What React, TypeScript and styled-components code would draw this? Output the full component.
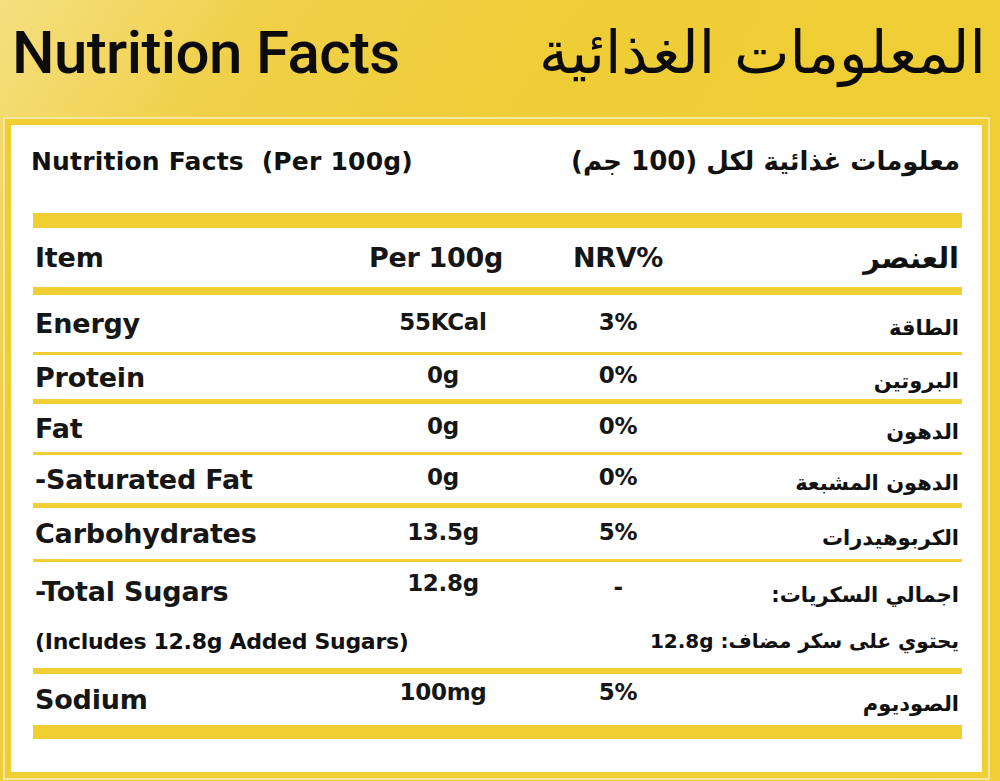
import React from "react";
import styled, { createGlobalStyle } from "styled-components";

const GlobalStyle = createGlobalStyle`
  html, body {
    margin: 0;
    padding: 0;
  }
  body {
    font-family: "DejaVu Sans", sans-serif;
    color: #111;
  }
`;

interface IRow {
  en: string;
  per: string;
  nrv: string;
  ar: string;
  h: number;
  line: number;
}

const rows: IRow[] = [
  { en: "Energy", per: "55KCal", nrv: "3%", ar: "الطاقة", h: 57, line: 3 },
  { en: "Protein", per: "0g", nrv: "0%", ar: "البروتين", h: 44, line: 5 },
  { en: "Fat", per: "0g", nrv: "0%", ar: "الدهون", h: 48, line: 3 },
  { en: "-Saturated Fat", per: "0g", nrv: "0%", ar: "الدهون المشبعة", h: 48, line: 5 },
  { en: "Carbohydrates", per: "13.5g", nrv: "5%", ar: "الكربوهيدرات", h: 51, line: 3 },
];

export default function App() {
  return (
    <>
      <GlobalStyle />
      <PageSC>
        <TitleBarSC>
          <TitleSC>Nutrition Facts</TitleSC>
          <TitleArSC dir="rtl">المعلومات الغذائية</TitleArSC>
        </TitleBarSC>
        <PanelSC>
          <SubHeadSC>
            <SubTitleSC>Nutrition Facts&nbsp;&nbsp;(Per 100g)</SubTitleSC>
            <SubTitleArSC dir="rtl">معلومات غذائية لكل (100 جم)</SubTitleArSC>
          </SubHeadSC>
          <BarSC $h={15} />
          <RowSC $h={59} $line={8}>
            <HeadCellSC>Item</HeadCellSC>
            <HeadValueSC $shift={14}>Per 100g</HeadValueSC>
            <HeadValueSC>NRV%</HeadValueSC>
            <HeadArSC dir="rtl">العنصر</HeadArSC>
          </RowSC>
          {rows.map((r) => (
            <RowSC key={r.en} $h={r.h} $line={r.line}>
              <LabelSC>{r.en}</LabelSC>
              <ValueSC>{r.per}</ValueSC>
              <ValueSC>{r.nrv}</ValueSC>
              <ArSC dir="rtl">{r.ar}</ArSC>
            </RowSC>
          ))}
          <SugarRowSC>
            <RowInnerSC $h={58}>
              <LabelSC>-Total Sugars</LabelSC>
              <ValueSC $up={8}>12.8g</ValueSC>
              <ValueSC $up={4}>-</ValueSC>
              <ArSC dir="rtl">اجمالي السكريات:</ArSC>
            </RowInnerSC>
            <NoteRowSC>
              <NoteSC>(Includes 12.8g Added Sugars)</NoteSC>
              <NoteArSC dir="rtl">يحتوي على سكر مضاف: 12.8g</NoteArSC>
            </NoteRowSC>
          </SugarRowSC>
          <RowSC $h={51} $line={0}>
            <LabelSC>Sodium</LabelSC>
            <ValueSC $up={8}>100mg</ValueSC>
            <ValueSC $up={8}>5%</ValueSC>
            <ArSC dir="rtl">الصوديوم</ArSC>
          </RowSC>
          <BarSC $h={14} />
        </PanelSC>
      </PageSC>
    </>
  );
}

const yellow = "#f0cf33";

const PageSC = styled.div`
  width: 1000px;
  height: 781px;
  overflow: hidden;
  background: linear-gradient(125deg, #f5df80 0%, #f0d048 18%, #efcd36 40%, #f0cf35 100%);
  padding-top: 14px;
  box-sizing: border-box;
`;

const TitleBarSC = styled.div`
  display: flex;
  justify-content: space-between;
  align-items: center;
  height: 76px;
  padding: 0 14px 0 12px;
`;

const TitleSC = styled.h1`
  margin: 0;
  font-family: Roboto, sans-serif;
  font-weight: 500;
  font-size: 60px;
  letter-spacing: -0.6px;
  color: #0b0b0b;
`;

const TitleArSC = styled.h1`
  margin: 0;
  font-family: "DejaVu Sans", sans-serif;
  font-weight: 400;
  font-size: 59px;
  color: #0b0b0b;
`;

const PanelSC = styled.div`
  margin: 27px 0 0 3px;
  width: 987px;
  height: 663px;
  box-sizing: border-box;
  background: #fff;
  border: 8px solid ${yellow};
  outline: 2px solid #f8e7a2;
  outline-offset: -2px;
  padding: 10px 20px 0 22px;
`;

const SubHeadSC = styled.div`
  display: flex;
  justify-content: space-between;
  align-items: center;
  height: 52px;
  margin-bottom: 26px;
`;

const SubTitleSC = styled.div`
  font-family: "DejaVu Sans", sans-serif;
  font-weight: 700;
  font-size: 25px;
  letter-spacing: 0.2px;
  margin-left: -2px;
  white-space: pre;
`;

const SubTitleArSC = styled.div`
  font-family: "DejaVu Sans", sans-serif;
  font-weight: 700;
  font-size: 26px;
  padding-right: 2px;
`;

const BarSC = styled.div<{ $h: number }>`
  height: ${(p) => p.$h}px;
  background: ${yellow};
`;

const RowSC = styled.div<{ $h: number; $line: number }>`
  display: grid;
  grid-template-columns: 335px 150px 200px 1fr;
  align-items: center;
  height: ${(p) => p.$h}px;
  border-bottom: ${(p) => p.$line}px solid ${yellow};
`;

const SugarRowSC = styled.div`
  height: 106px;
  border-bottom: 6px solid ${yellow};
  display: flex;
  flex-direction: column;
`;

const RowInnerSC = styled.div<{ $h: number }>`
  display: grid;
  grid-template-columns: 335px 150px 200px 1fr;
  align-items: center;
  height: ${(p) => p.$h}px;
`;

const NoteRowSC = styled.div`
  display: flex;
  justify-content: space-between;
  align-items: center;
  height: 42px;
`;

const LabelSC = styled.div`
  font-family: "DejaVu Sans", sans-serif;
  font-weight: 700;
  font-size: 27px;
  letter-spacing: -0.2px;
  padding-left: 2px;
  color: #161616;
`;

const HeadCellSC = styled(LabelSC)`
  font-size: 27px;
`;

const ValueSC = styled.div<{ $up?: number }>`
  font-family: "DejaVu Sans", sans-serif;
  font-weight: 700;
  font-size: 23px;
  letter-spacing: -0.3px;
  text-align: center;
  position: relative;
  top: ${(p) => -(p.$up ?? 2)}px;
  color: #161616;
`;

const HeadValueSC = styled.div<{ $shift?: number }>`
  font-family: "DejaVu Sans", sans-serif;
  font-weight: 700;
  font-size: 27px;
  letter-spacing: -0.3px;
  text-align: center;
  color: #161616;
  padding-right: ${(p) => p.$shift ?? 0}px;
  white-space: nowrap;
`;

const ArSC = styled.div`
  font-family: "DejaVu Sans", sans-serif;
  font-size: 21px;
  font-weight: 700;
  text-align: right;
  padding-right: 3px;
  position: relative;
  top: 4px;
`;

const HeadArSC = styled(ArSC)`
  font-size: 29px;
  top: 0;
`;

const NoteSC = styled.div`
  font-family: "DejaVu Sans", sans-serif;
  font-weight: 700;
  font-size: 22px;
  letter-spacing: -0.3px;
  padding-left: 2px;
`;

const NoteArSC = styled.div`
  font-family: "DejaVu Sans", sans-serif;
  font-size: 20px;
  font-weight: 700;
  padding-right: 3px;
`;
